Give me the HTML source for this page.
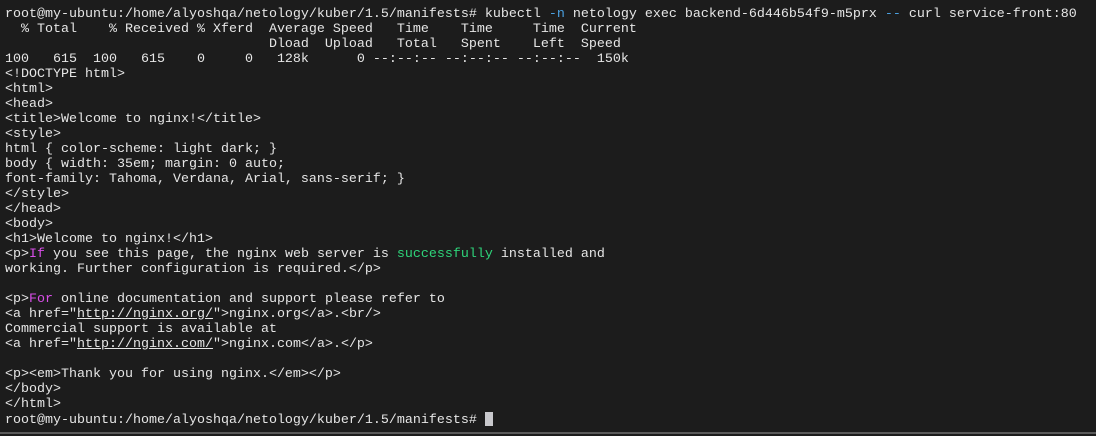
<!DOCTYPE html>
<html><head><style>
html,body{margin:0;padding:0;background:#1c1c1c;width:1096px;height:436px;overflow:hidden}
pre{margin:0;padding:7px 0 0 5px;font-family:"Liberation Mono",monospace;font-size:13.333px;line-height:15px;color:#e6e6e6;white-space:pre}
.b{color:#4aa0e0}.m{color:#d84ee8}.g{color:#2ed47a}u{text-decoration:underline}
.cur{display:inline-block;width:8px;height:14px;background:#c8c8cc;vertical-align:-3px}
.bar{position:absolute;left:0;top:432px;width:1096px;height:2px;background:#5a5a5a}
</style></head><body>
<pre>root@my-ubuntu:/home/alyoshqa/netology/kuber/1.5/manifests# kubectl <span class="b">-n</span> netology exec backend-6d446b54f9-m5prx <span class="b">--</span> curl service-front:80
  % Total    % Received % Xferd  Average Speed   Time    Time     Time  Current
                                 Dload  Upload   Total   Spent    Left  Speed
100   615  100   615    0     0   128k      0 --:--:-- --:--:-- --:--:--  150k
&lt;!DOCTYPE html&gt;
&lt;html&gt;
&lt;head&gt;
&lt;title&gt;Welcome to nginx!&lt;/title&gt;
&lt;style&gt;
html { color-scheme: light dark; }
body { width: 35em; margin: 0 auto;
font-family: Tahoma, Verdana, Arial, sans-serif; }
&lt;/style&gt;
&lt;/head&gt;
&lt;body&gt;
&lt;h1&gt;Welcome to nginx!&lt;/h1&gt;
&lt;p&gt;<span class="m">If</span> you see this page, the nginx web server is <span class="g">successfully</span> installed and
working. Further configuration is required.&lt;/p&gt;

&lt;p&gt;<span class="m">For</span> online documentation and support please refer to
&lt;a href="<u>http://nginx.org/</u>"&gt;nginx.org&lt;/a&gt;.&lt;br/&gt;
Commercial support is available at
&lt;a href="<u>http://nginx.com/</u>"&gt;nginx.com&lt;/a&gt;.&lt;/p&gt;

&lt;p&gt;&lt;em&gt;Thank you for using nginx.&lt;/em&gt;&lt;/p&gt;
&lt;/body&gt;
&lt;/html&gt;
root@my-ubuntu:/home/alyoshqa/netology/kuber/1.5/manifests# <span class="cur"></span></pre>
<div class="bar"></div>
</body></html>
